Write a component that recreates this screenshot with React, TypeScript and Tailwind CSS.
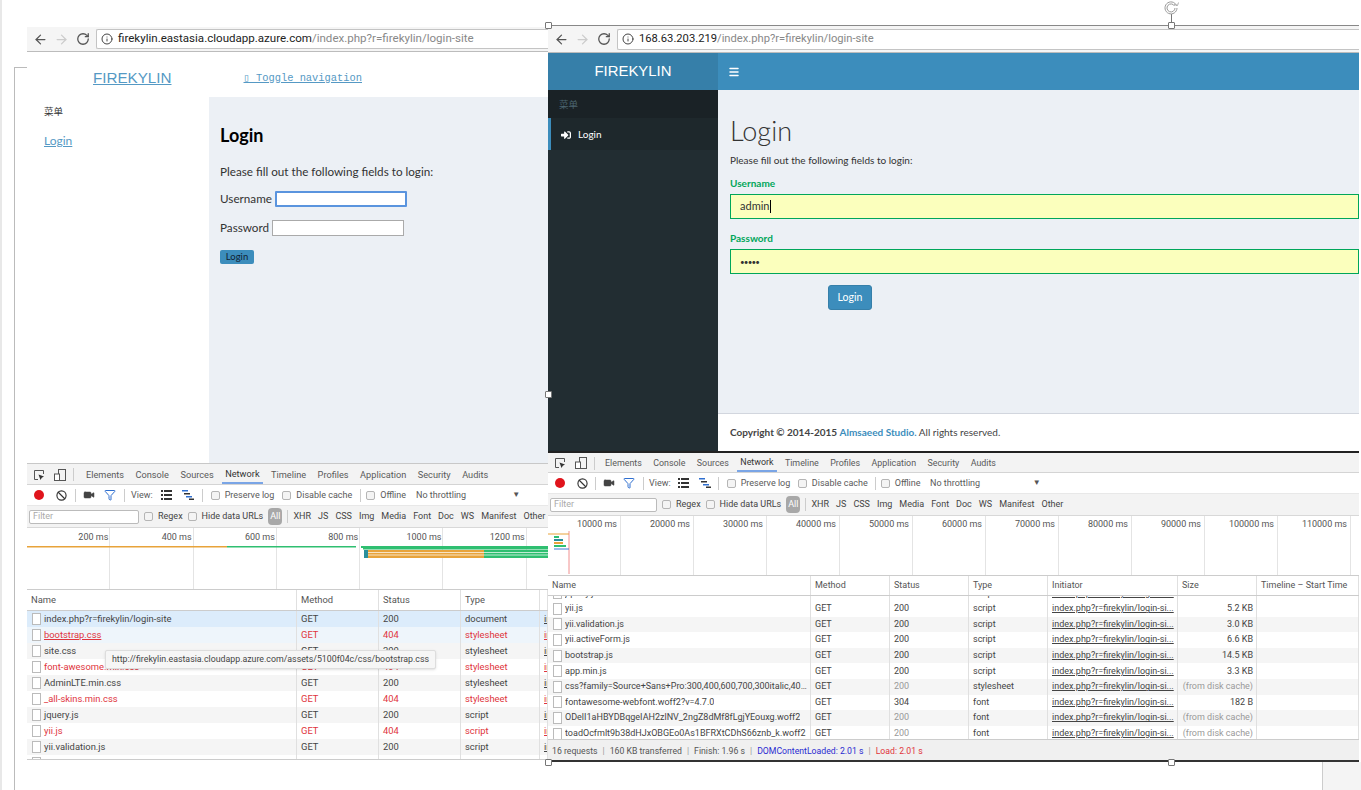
import { ArrowLeft, ArrowRight, Ban, Filter, Info, Menu, RotateCw, Video } from "lucide-react";
import { FaSignInAlt } from "react-icons/fa";

type Row = {
  name: string;
  method?: string;
  status: string;
  type: string;
  size?: string;
  error?: boolean;
  cached?: boolean;
  bg?: string;
  link?: boolean;
};

const ui = "font-['Roboto',sans-serif]";
const page = "font-['Lato',sans-serif]";
const tabs = ["Elements", "Console", "Sources", "Network", "Timeline", "Profiles", "Application", "Security", "Audits"];
const kinds = ["XHR", "JS", "CSS", "Img", "Media", "Font", "Doc", "WS", "Manifest", "Other"];

const leftRows: Row[] = [
  { name: "index.php?r=firekylin/login-site", status: "200", type: "document", bg: "bg-[#dcecfb]" },
  { name: "bootstrap.css", status: "404", type: "stylesheet", error: true, bg: "bg-[#eef5fb]", link: true },
  { name: "site.css", status: "200", type: "stylesheet", bg: "bg-[#f5f5f5]" },
  { name: "font-awesome.min.css", status: "404", type: "stylesheet", error: true },
  { name: "AdminLTE.min.css", status: "200", type: "stylesheet", bg: "bg-[#f5f5f5]" },
  { name: "_all-skins.min.css", status: "404", type: "stylesheet", error: true },
  { name: "jquery.js", status: "200", type: "script", bg: "bg-[#f5f5f5]" },
  { name: "yii.js", status: "404", type: "script", error: true },
  { name: "yii.validation.js", status: "200", type: "script", bg: "bg-[#f5f5f5]" },
  { name: "yii.activeForm.js", status: "404", type: "script", error: true },
];

const rightRows: Row[] = [
  { name: "jquery.js", status: "200", type: "script", size: "70.2 KB" },
  { name: "yii.js", status: "200", type: "script", size: "5.2 KB" },
  { name: "yii.validation.js", status: "200", type: "script", size: "3.0 KB", bg: "bg-[#f5f5f5]" },
  { name: "yii.activeForm.js", status: "200", type: "script", size: "6.6 KB" },
  { name: "bootstrap.js", status: "200", type: "script", size: "14.5 KB", bg: "bg-[#f5f5f5]" },
  { name: "app.min.js", status: "200", type: "script", size: "3.3 KB" },
  { name: "css?family=Source+Sans+Pro:300,400,600,700,300italic,400i...", status: "200", type: "stylesheet", size: "(from disk cache)", cached: true, bg: "bg-[#f5f5f5]" },
  { name: "fontawesome-webfont.woff2?v=4.7.0", status: "304", type: "font", size: "182 B" },
  { name: "ODelI1aHBYDBqgeIAH2zlNV_2ngZ8dMf8fLgjYEouxg.woff2", status: "200", type: "font", size: "(from disk cache)", cached: true, bg: "bg-[#f5f5f5]" },
  { name: "toadOcfmlt9b38dHJxOBGEo0As1BFRXtCDhS66znb_k.woff2", status: "200", type: "font", size: "(from disk cache)", cached: true },
];

function Check({ label }: { label: string }) {
  return (
    <span className="flex shrink-0 items-center gap-[5px] whitespace-nowrap">
      <span className="h-[9px] w-[9px] rounded-[2px] border border-[#b5b5b5] bg-[#f4f4f4]" />
      {label}
    </span>
  );
}

function InspectIcon() {
  return (
    <svg width="12" height="12" viewBox="0 0 12 12" fill="none" stroke="#555">
      <path d="M5 10.5H1.5V1.5H10.5V5" />
      <path d="M5.5 5.5L11 7.5L8.8 8.8L7.5 11Z" fill="#333" stroke="none" />
    </svg>
  );
}

function DeviceIcon() {
  return (
    <svg width="12" height="12" viewBox="0 0 12 12" fill="none" stroke="#555">
      <rect x="4.5" y="0.5" width="7" height="11" />
      <rect x="0.5" y="5" width="5" height="6.5" fill="#fff" />
    </svg>
  );
}

function ListIcon() {
  return (
    <svg width="11" height="10" viewBox="0 0 11 10" fill="#333">
      <path d="M0 0h2v2H0zM3 0h8v2H3zM0 4h2v2H0zM3 4h8v2H3zM0 8h2v2H0zM3 8h8v2H3z" />
    </svg>
  );
}

function WaterfallIcon() {
  return (
    <svg width="12" height="10" viewBox="0 0 12 10">
      <path d="M0 0h6v1.5H0z" fill="#2f6fd0" />
      <path d="M2 3h6v1.5H2z" fill="#333" />
      <path d="M4 6h6v1.5H4z" fill="#2f6fd0" />
      <path d="M7 8.5h5V10H7z" fill="#333" />
    </svg>
  );
}

function TabsBar({ gap, sep, bar }: { gap: string; sep: string; bar: string }) {
  return (
    <div className={`flex shrink-0 items-center border-b border-[#d4d4d4] bg-[#f3f3f3] pl-[6px] pt-px ${bar}`}>
      <InspectIcon />
      <span className="ml-[9px]"><DeviceIcon /></span>
      <span className={`ml-[7px] h-[13px] w-px bg-[#ccc] ${sep}`} />
      <div className={`flex h-full items-center whitespace-nowrap ${gap}`}>
        {tabs.map((t) => (
          <span
            key={t}
            className={t === "Network" ? "-mx-[3px] flex h-full items-center border-b-2 border-[#7aa5e6] px-[3px] text-[#333]" : "text-[#5a5a5a]"}
          >
            {t}
          </span>
        ))}
      </div>
    </div>
  );
}

function Toolbar({ gap, arrow }: { gap: string; arrow: string }) {
  return (
    <div className={`flex h-[21px] shrink-0 items-center whitespace-nowrap border-b border-[#e8e8e8] bg-white pl-[7px] text-[9px] text-[#5a5a5a] ${gap}`}>
      <span className="h-[10px] w-[10px] rounded-full bg-[#e0141c]" />
      <Ban size={11} strokeWidth={2.5} className="ml-[4px] text-[#333]" />
      <span className="h-[13px] w-px bg-[#ccc]" />
      <Video size={12} fill="#444" strokeWidth={1} className="-ml-px text-[#444]" />
      <Filter size={12} strokeWidth={2} className="ml-px text-[#2f6fd0]" />
      <span className="h-[13px] w-px bg-[#ccc]" />
      <span className="-ml-[2px]">View:</span>
      <ListIcon />
      <span className="ml-[2px]"><WaterfallIcon /></span>
      <span className="h-[13px] w-px bg-[#ccc]" />
      <Check label="Preserve log" />
      <Check label="Disable cache" />
      <span className="h-[13px] w-px bg-[#ccc]" />
      <span className="-ml-[3px]"><Check label="Offline" /></span>
      <span className="ml-[2px]">No throttling</span>
      <span className={`text-[8px] text-[#555] ${arrow}`}>▼</span>
    </div>
  );
}

function FilterBar({ inputW }: { inputW: string }) {
  return (
    <div className="flex h-[22px] shrink-0 items-center gap-[5px] overflow-hidden whitespace-nowrap border-b border-[#d8d8d8] bg-[#f3f3f3] pl-[2px] text-[9px] text-[#444]">
      <span className={`flex h-[14px] shrink-0 items-center rounded-[2px] border border-[#bbb] bg-white pl-[3px] text-[#aaa] ${inputW}`}>Filter</span>
      <Check label="Regex" />
      <Check label="Hide data URLs" />
      <span className="rounded-[4px] bg-[#a8a8a8] px-[2px] py-[4px] text-white">All</span>
      <span className="h-[13px] w-px shrink-0 bg-[#ccc]" />
      <div className="flex gap-[7px]">
        {kinds.map((k) => (
          <span key={k} className="shrink-0">{k}</span>
        ))}
      </div>
    </div>
  );
}

function Ticks({ labels, cell, h }: { labels: string[]; cell: string; h: string }) {
  return (
    <div className={`flex shrink-0 overflow-hidden border-b border-[#ccc] bg-white text-[9px] text-[#555] ${h}`}>
      {labels.map((l) => (
        <div key={l} className={`shrink-0 whitespace-nowrap border-r border-[#e4e4e4] text-right ${cell}`}>
          {l}
        </div>
      ))}
    </div>
  );
}

function FileIcon() {
  return <span className="mr-[3px] h-[12px] w-[9px] shrink-0 border border-[#bbb] bg-white" />;
}

function Cell({ className, children }: { className?: string; children?: React.ReactNode }) {
  return (
    <div className={`flex h-full items-center overflow-hidden whitespace-nowrap border-r border-[#e0e0e0] pl-[4px] ${className ?? ""}`}>
      {children}
    </div>
  );
}

function LeftDevtools() {
  const columns = "grid-cols-[270px_82px_82px_79px_8px]";
  return (
    <div className={`relative flex h-[297px] shrink-0 flex-col border-t border-[#c8c8c8] text-[9.4px] leading-none ${ui}`}>
      <TabsBar gap="gap-[11.5px]" sep="mr-[12px]" bar="h-[21px] text-[9.2px]" />
      <Toolbar gap="gap-[8px]" arrow="ml-[38px]" />
      <FilterBar inputW="w-[110px]" />
      <div className="relative">
        <Ticks h="h-[62px]" cell="w-[83.3px] pr-[1px] pt-[5px]" labels={["200 ms", "400 ms", "600 ms", "800 ms", "1000 ms", "1200 ms", "1400 ms"]} />
        <svg className="absolute left-0 top-0" width="521" height="61" viewBox="0 0 521 61">
          <rect x="0" y="18" width="200" height="1.5" fill="#e8a33a" />
          <rect x="200" y="18" width="129" height="1.5" fill="#2fbf71" />
          <rect x="334" y="18" width="187" height="2" fill="#2fbf71" />
          <rect x="336" y="20" width="185" height="1.5" fill="#2fbf71" />
          <rect x="337" y="22" width="4" height="8" fill="#2a8f9c" />
          <rect x="341" y="22" width="116" height="8" fill="#e8a33a" />
          <rect x="457" y="22" width="64" height="8" fill="#2fbf71" />
          <path d="M341 24.5h180M341 27h180" stroke="#fff" strokeWidth="0.7" />
        </svg>
      </div>
      <div className={`grid h-[21px] shrink-0 items-center border-b border-[#ccc] bg-white text-[#555] ${columns}`}>
        <Cell className="pl-[3px]">Name</Cell>
        <Cell>Method</Cell>
        <Cell>Status</Cell>
        <Cell>Type</Cell>
        <Cell />
      </div>
      <div className="min-h-0 flex-1 overflow-hidden border-b border-[#ccc]">
        {leftRows.map((r) => (
          <div key={r.name} className={`grid h-[16px] ${columns} ${r.bg ?? "bg-white"} ${r.error ? "text-[#e0343c]" : "text-[#444]"}`}>
            <Cell className="pl-[5px]">
              <FileIcon />
              <span className={r.link ? "underline" : ""}>{r.name}</span>
            </Cell>
            <Cell>GET</Cell>
            <Cell>{r.status}</Cell>
            <Cell>{r.type}</Cell>
            <Cell className="underline">index</Cell>
          </div>
        ))}
      </div>
      {/* hover tooltip over the table */}
      <div className="absolute left-[78px] top-[186px] flex h-[19px] items-center whitespace-nowrap rounded-[2px] border border-[#ddd] bg-[#f6f6f6] px-[6px] text-[8.8px] text-[#444] shadow-sm">
        http://firekylin.eastasia.cloudapp.azure.com/assets/5100f04c/css/bootstrap.css
      </div>
    </div>
  );
}

function RightDevtools() {
  const columns = "grid-cols-[263px_79px_79px_79px_130px_79px_102px]";
  return (
    <div className={`flex h-[307px] shrink-0 flex-col text-[9px] leading-none ${ui}`}>
      <TabsBar gap="gap-[11.4px]" sep="mr-[10px]" bar="h-[20px] text-[8.9px]" />
      <Toolbar gap="gap-[7.5px]" arrow="ml-[45px]" />
      <FilterBar inputW="w-[107px]" />
      <div className="relative">
        <Ticks
          h="h-[60px]"
          cell="w-[73px] pr-[3px] pt-[4px]"
          labels={["10000 ms", "20000 ms", "30000 ms", "40000 ms", "50000 ms", "60000 ms", "70000 ms", "80000 ms", "90000 ms", "100000 ms", "110000 ms"]}
        />
        <svg className="absolute left-0 top-0" width="811" height="59" viewBox="0 0 811 59">
          <path d="M21 15V58" stroke="#f09090" />
          <path d="M0 18H21" stroke="#e8a33a" />
          <rect x="6" y="20" width="5" height="2" fill="#2fbf71" />
          <rect x="6" y="23" width="9" height="2" fill="#2a8f9c" />
          <rect x="6" y="26" width="9" height="2" fill="#e8a33a" />
          <rect x="6" y="29" width="12" height="2" fill="#2fbf71" />
          <path d="M6 33H21" stroke="#3a7bd5" />
        </svg>
      </div>
      <div className={`grid h-[20px] shrink-0 items-center border-b border-[#ccc] bg-white text-[#555] ${columns}`}>
        <Cell className="pl-[3px]">Name</Cell>
        <Cell>Method</Cell>
        <Cell>Status</Cell>
        <Cell>Type</Cell>
        <Cell>Initiator</Cell>
        <Cell>Size</Cell>
        <Cell className="pl-[1px]">Timeline – Start Time</Cell>
      </div>
      <div className="min-h-0 flex-1 overflow-hidden">
        <div className="-mt-[10.6px]">
          {rightRows.map((r) => (
            <div key={r.name} className={`grid h-[15.6px] text-[#444] ${columns} ${r.bg ?? "bg-white"}`}>
              <Cell className="pl-[5px]">
                <FileIcon />
                <span className="truncate">{r.name}</span>
              </Cell>
              <Cell>GET</Cell>
              <Cell className={r.cached ? "text-[#999]" : ""}>{r.status}</Cell>
              <Cell>{r.type}</Cell>
              <Cell>
                <span className="underline">index.php?r=firekylin/login-si...</span>
              </Cell>
              <Cell className={`justify-end pr-[3px] ${r.cached ? "text-[#999]" : ""}`}>{r.size}</Cell>
              <Cell />
            </div>
          ))}
        </div>
      </div>
      <div className="flex h-[21px] shrink-0 items-center gap-[5px] border-t border-[#ccc] bg-[#f0f0f0] px-[4px] pt-[2px] text-[8.7px] text-[#555]">
        <span>16 requests</span>
        <span className="text-[#999]">|</span>
        <span>160 KB transferred</span>
        <span className="text-[#999]">|</span>
        <span>Finish: 1.96 s</span>
        <span className="text-[#999]">|</span>
        <span className="text-[#2a2ad0]">DOMContentLoaded: 2.01 s</span>
        <span className="text-[#999]">|</span>
        <span className="text-[#e0343c]">Load: 2.01 s</span>
      </div>
    </div>
  );
}

function AddressBar({ host, h, box }: { host: string; h: string; box: string }) {
  return (
    <div className={`flex shrink-0 items-center border-b border-[#bcbcbc] bg-[#f5f5f5] pl-[6px] ${h}`}>
      <ArrowLeft size={15} strokeWidth={2} className="text-[#555]" />
      <ArrowRight size={15} strokeWidth={2} className="ml-[6px] text-[#ccc]" />
      <RotateCw size={14} strokeWidth={2.2} className="ml-[7px] text-[#555]" />
      <div className={`ml-[6px] flex flex-1 items-center rounded-l-[2px] border border-r-0 border-[#c4c4c4] bg-white pl-[4px] ${box} ${ui}`}>
        <Info size={12} className="mr-[5px] shrink-0 text-[#444]" />
        <span className="whitespace-nowrap text-[#222]">{host}</span>
        <span className="whitespace-nowrap text-[#888]">/index.php?r=firekylin/login-site</span>
      </div>
    </div>
  );
}

function LeftPage() {
  return (
    <div className={`flex min-h-0 flex-1 flex-col bg-white ${page}`}>
      <div className="flex h-[45px] shrink-0 items-center pt-[7px] text-[#5599c4]">
        <a className="ml-[66px] font-['Liberation_Sans',sans-serif] text-[15.2px] underline">FIREKYLIN</a>
        <a className="ml-[72px] pt-px font-['Liberation_Mono',monospace] text-[10.4px] underline">▯ Toggle navigation</a>
      </div>
      <div className="flex min-h-0 flex-1">
        <aside className="w-[182px] shrink-0 pl-[17px] pt-[7px]">
          <div className="font-['Noto_Sans_CJK_SC',sans-serif] text-[9.5px] text-[#333]">菜单</div>
          <a className="mt-[14px] block text-[12px] text-[#5599c4] underline">Login</a>
        </aside>
        <main className="flex-1 bg-[#ecf0f5] pl-[11px] pt-[26px] text-[11.7px] text-[#333]">
          <h1 className="text-[18px] font-bold leading-[24px] text-black">Login</h1>
          <p className="mt-[16px] leading-[16px]">Please fill out the following fields to login:</p>
          <div className="mt-[12px] flex h-[16px] items-center gap-[3px]">
            <span>Username</span>
            <span className="h-[16px] w-[132px] rounded-[1px] border-2 border-[#5a94de] bg-white" />
          </div>
          <div className="mt-[13px] flex h-[16px] items-center gap-[3px]">
            <span>Password</span>
            <span className="h-[16px] w-[132px] border border-[#aaa] bg-white" />
          </div>
          <button className="mt-[14px] block h-[14px] w-[34px] rounded-[2px] bg-[#3c8dbc] text-[9.5px] leading-none text-[#123]">Login</button>
        </main>
      </div>
    </div>
  );
}

function RightPage() {
  return (
    <div className={`flex min-h-0 flex-1 flex-col ${page}`}>
      <div className="flex h-[37px] shrink-0 bg-[#3c8dbc] text-white">
        <div className="flex w-[170px] items-center justify-center bg-[#367fa9] font-['Liberation_Sans',sans-serif] text-[14.9px]">FIREKYLIN</div>
        <Menu size={12} strokeWidth={3} className="ml-[10px] self-center" />
      </div>
      <div className="flex min-h-0 flex-1">
        <aside className="w-[170px] shrink-0 bg-[#222d32] text-[10px]">
          <div className="flex h-[28px] items-center bg-[#1a2226] pl-[11px] font-['Noto_Sans_CJK_SC',sans-serif] text-[9.5px] text-[#4b646f]">菜单</div>
          <div className="flex h-[32px] items-center border-l-[3px] border-[#3c8dbc] bg-[#1e282c] pl-[10px] pt-px text-white">
            <FaSignInAlt size={10} className="mr-[7px]" />
            Login
          </div>
        </aside>
        <div className="flex min-w-0 flex-1 flex-col bg-[#ecf0f5]">
          <main className="min-h-0 flex-1 pl-[12px] pt-[23px] text-[10px] text-[#333]">
            <h1 className="text-[27px] font-light leading-[36px]">Login</h1>
            <p className="mt-[3px] leading-[16px]">Please fill out the following fields to login:</p>
            <div className="mt-[8px] text-[10px] font-bold leading-[14px] text-[#00a65a]">Username</div>
            <div className="mt-[4px] flex h-[25px] items-center border border-[#00a65a] bg-[#fbffbd] pl-[9px] text-[11px]">
              admin<span className="ml-px h-[13px] w-px bg-black" />
            </div>
            <div className="mt-[12px] text-[10px] font-bold leading-[14px] text-[#00a65a]">Password</div>
            <div className="mt-[4px] flex h-[25px] items-center border border-[#00a65a] bg-[#fbffbd] pl-[9px] text-[8px] leading-none tracking-[-0.8px]">•••••</div>
            <button className="ml-[98px] mt-[11px] block h-[25px] w-[44px] rounded-[3px] border border-[#367fa9] bg-[#3c8dbc] text-[10.5px] text-white">Login</button>
          </main>
          <footer className="flex h-[38px] shrink-0 items-center border-t border-[#d2d6de] bg-white pl-[12px] text-[10px] text-[#444]">
            <b>Copyright © 2014-2015&nbsp;</b>
            <b className="text-[#3c8dbc]">Almsaeed Studio.</b>
            <span>&nbsp;All rights reserved.</span>
          </footer>
        </div>
      </div>
    </div>
  );
}

function Handle({ className }: { className: string }) {
  return <span className={`absolute h-[7px] w-[7px] rounded-[1px] border border-[#777] bg-white ${className}`} />;
}

function RotateHandle() {
  return (
    <svg className="absolute left-[1163px] top-0" width="17" height="15" viewBox="0 0 17 15" fill="none" stroke="#999">
      <path d="M13.5 5.5A6 6 0 1 0 14 8" />
      <path d="M11.5 6A4 4 0 1 0 12 8" />
      <path d="M11 4.5L14.5 5.5L15.5 2.5" strokeWidth="0.8" />
    </svg>
  );
}

export default function App() {
  return (
    <div className="relative h-[790px] w-[1361px] overflow-hidden bg-white">
      {/* Word-style document frame behind the pasted screenshots */}
      <div className="absolute left-0 top-0 h-full w-[2px] bg-[#e8e8e8]" />
      <div className="absolute left-[14px] top-[67px] h-[723px] w-[14px] border-l border-t border-[#bbb]" />
      <div className="absolute left-[1322px] top-[762px] h-[28px] w-[39px] border-l border-[#ccc] bg-[#f4f4f4]" />

      {/* left pasted window */}
      <div className="absolute left-[27px] top-[27px] flex h-[733px] w-[521px] flex-col overflow-hidden">
        <AddressBar h="h-[25px]" host="firekylin.eastasia.cloudapp.azure.com" box="h-[20px] text-[11.55px]" />
        <LeftPage />
        <LeftDevtools />
      </div>

      {/* right pasted window */}
      <div className="absolute left-[548px] top-[25px] flex h-[737px] w-[811px] flex-col overflow-hidden border-t border-[#888]">
        <AddressBar h="h-[27px]" host="168.63.203.219" box="h-[21px] text-[11.2px]" />
        <RightPage />
        <div className="h-[2px] shrink-0 bg-[#222]" />
        <RightDevtools />
        <div className="h-[2px] shrink-0 bg-[#333]" />
      </div>

      {/* selection handles of the picture */}
      <Handle className="left-[545px] top-[22px]" />
      <Handle className="left-[545px] top-[391px]" />
      <Handle className="left-[545px] top-[759px]" />
      <Handle className="left-[1168px] top-[22px]" />
      <Handle className="left-[1168px] top-[759px]" />
      <span className="absolute left-[1171px] top-[14px] h-[9px] w-px bg-[#777]" />
      <RotateHandle />
    </div>
  );
}
